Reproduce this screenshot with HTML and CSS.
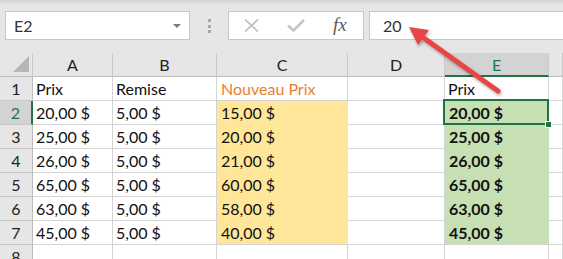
FILE: index.html
```html
<!DOCTYPE html>
<html lang="fr">
<head>
    <meta charset="UTF-8">
    <title>Nouveau Prix</title>
    <link rel="stylesheet" href="styles.css">
</head>
<body>
    <div class="toolbar">
        <div class="namebox">
            <span>E2</span>
            <span class="caret"></span>
        </div>
        <div class="grip"><i></i><i></i><i></i></div>
        <div class="fx-buttons">
            <svg width="15" height="13" viewBox="0 0 15 13"><path d="M1 0.5 L14 12.5 M14 0.5 L1 12.5" stroke="#bdbdbd" stroke-width="1.7" fill="none"/></svg>
            <svg width="18" height="13" viewBox="0 0 18 13"><path d="M1 6.5 L6.5 11.5 L17 1" stroke="#c4c4c4" stroke-width="2.6" fill="none"/></svg>
            <span class="fx">fx</span>
        </div>
        <div class="formula">20</div>
    </div>

    <div class="sheet">
        <div class="corner"><span class="tri"></span></div>
        <div class="hd">A</div>
        <div class="hd">B</div>
        <div class="hd">C</div>
        <div class="hd">D</div>
        <div class="hd active">E</div>
        <div class="hd"></div>

        <div class="rh">1</div>
        <div class="c">Prix</div>
        <div class="c">Remise</div>
        <div class="c orange">Nouveau Prix</div>
        <div class="c"></div>
        <div class="c">Prix</div>
        <div class="c"></div>

        <div class="rh active">2</div>
        <div class="c">20,00 $</div>
        <div class="c">5,00 $</div>
        <div class="c yellow">15,00 $</div>
        <div class="c"></div>
        <div class="c green selected">20,00 $<span class="handle"></span></div>
        <div class="c"></div>

        <div class="rh">3</div>
        <div class="c">25,00 $</div>
        <div class="c">5,00 $</div>
        <div class="c yellow">20,00 $</div>
        <div class="c"></div>
        <div class="c green">25,00 $</div>
        <div class="c"></div>

        <div class="rh">4</div>
        <div class="c">26,00 $</div>
        <div class="c">5,00 $</div>
        <div class="c yellow">21,00 $</div>
        <div class="c"></div>
        <div class="c green">26,00 $</div>
        <div class="c"></div>

        <div class="rh">5</div>
        <div class="c">65,00 $</div>
        <div class="c">5,00 $</div>
        <div class="c yellow">60,00 $</div>
        <div class="c"></div>
        <div class="c green">65,00 $</div>
        <div class="c"></div>

        <div class="rh">6</div>
        <div class="c">63,00 $</div>
        <div class="c">5,00 $</div>
        <div class="c yellow">58,00 $</div>
        <div class="c"></div>
        <div class="c green">63,00 $</div>
        <div class="c"></div>

        <div class="rh">7</div>
        <div class="c">45,00 $</div>
        <div class="c">5,00 $</div>
        <div class="c yellow last">40,00 $</div>
        <div class="c"></div>
        <div class="c green last">45,00 $</div>
        <div class="c"></div>

        <div class="rh">8</div>
        <div class="c"></div>
        <div class="c"></div>
        <div class="c"></div>
        <div class="c"></div>
        <div class="c"></div>
        <div class="c"></div>
    </div>

    <!-- callout arrow pointing at the formula bar -->
    <svg class="arrow" width="563" height="259" viewBox="0 0 563 259">
        <line x1="498" y1="91" x2="421" y2="36" stroke="#e94545" stroke-width="5" stroke-linecap="round"/>
        <polygon points="409,27 429,30 418,45" fill="#e94545"/>
    </svg>
</body>
</html>
```

FILE: styles.css
```css
* {
    margin: 0;
    padding: 0;
    box-sizing: border-box;
}
body {
    width: 563px;
    height: 259px;
    overflow: hidden;
    background: #e6e6e6;
    font-family: Lato, "Liberation Sans", sans-serif;
    position: relative;
}
.toolbar {
    height: 53px;
    padding-top: 11px;
    display: flex;
    align-items: flex-start;
    background: linear-gradient(#d3d3d3, #e6e6e6 5px);
}
.namebox {
    margin-left: 5px;
    width: 185px;
    height: 29px;
    background: white;
    border: 1px solid #c6c6c6;
    display: flex;
    align-items: center;
    justify-content: space-between;
    padding: 0 8px 0 8px;
    font-size: 16px;
    color: #333;
}
.caret {
    width: 0;
    height: 0;
    border-left: 4px solid transparent;
    border-right: 4px solid transparent;
    border-top: 4px solid #7a7a7a;
    margin-top: 1px;
}
.grip {
    margin: 8px 17px 0 18px;
    display: flex;
    flex-direction: column;
    gap: 2.5px;
}
.grip i {
    display: block;
    width: 3px;
    height: 3px;
    background: #a6a6a6;
}
.fx-buttons {
    width: 136px;
    height: 29px;
    background: white;
    border: 1px solid #c6c6c6;
    display: flex;
    align-items: center;
    gap: 28px;
    padding-left: 15px;
}
.fx {
    font-family: "Liberation Serif", serif;
    font-style: italic;
    font-size: 19px;
    color: #5a5a5a;
    margin-top: -2px;
}
.formula {
    margin-left: 5px;
    flex: 1;
    height: 29px;
    margin-right: -2px;
    background: white;
    border: 1px solid #c6c6c6;
    padding-left: 13px;
    font-size: 16px;
    line-height: 27px;
    color: #333;
}
.sheet {
    display: grid;
    grid-template-columns: 33px 80px 104px 131px 97px 104px 1fr;
    grid-auto-rows: 24px;
    background: white;
}
.corner {
    background: #e6e6e6;
    border-right: 1px solid #c8c8c8;
    border-bottom: 1px solid #bdbdbd;
    display: flex;
    align-items: flex-end;
    justify-content: flex-end;
    padding: 0 3px 4px 0;
}
.tri {
    width: 0;
    height: 0;
    border-left: 16px solid transparent;
    border-bottom: 16px solid #b6b6b6;
}
.hd {
    background: #e6e6e6;
    border-right: 1px solid #c8c8c8;
    border-bottom: 1px solid #bdbdbd;
    text-align: center;
    font-size: 16px;
    line-height: 23px;
    color: #222;
}
.hd.active {
    background: #d3d3d3;
    color: #217346;
    border-bottom: 2px solid #217346;
}
.rh {
    background: #e6e6e6;
    border-right: 1px solid #bdbdbd;
    border-bottom: 1px solid #c8c8c8;
    text-align: center;
    font-size: 16px;
    line-height: 24px;
    color: #222;
}
.rh.active {
    background: #d3d3d3;
    color: #217346;
    border-right: 2px solid #217346;
}
.c {
    border-right: 1px solid #d4d4d4;
    border-bottom: 1px solid #d4d4d4;
    font-size: 16px;
    line-height: 24px;
    padding-left: 3px;
    color: #111;
    white-space: nowrap;
}
.orange {
    color: #ed7d31;
    padding-left: 4px;
}
.yellow {
    background: #ffe699;
    border-color: #ffe699;
    padding-left: 4px;
}
.green {
    background: #c6e0b4;
    border-color: #c6e0b4;
    font-weight: bold;
    padding-left: 4px;
}
.last {
    border-bottom-color: #d4d4d4;
}
.selected {
    position: relative;
}
.selected::after {
    content: "";
    position: absolute;
    top: -2px;
    left: -2px;
    right: -1px;
    bottom: -1px;
    border: 2px solid #217346;
}
.handle {
    position: absolute;
    right: -4px;
    bottom: -4px;
    width: 7px;
    height: 7px;
    background: #217346;
    border: 1px solid white;
    z-index: 2;
}
.arrow {
    position: absolute;
    top: 0;
    left: 0;
    pointer-events: none;
    filter: drop-shadow(1px 2px 1.5px rgba(0, 0, 0, 0.3));
}
```
